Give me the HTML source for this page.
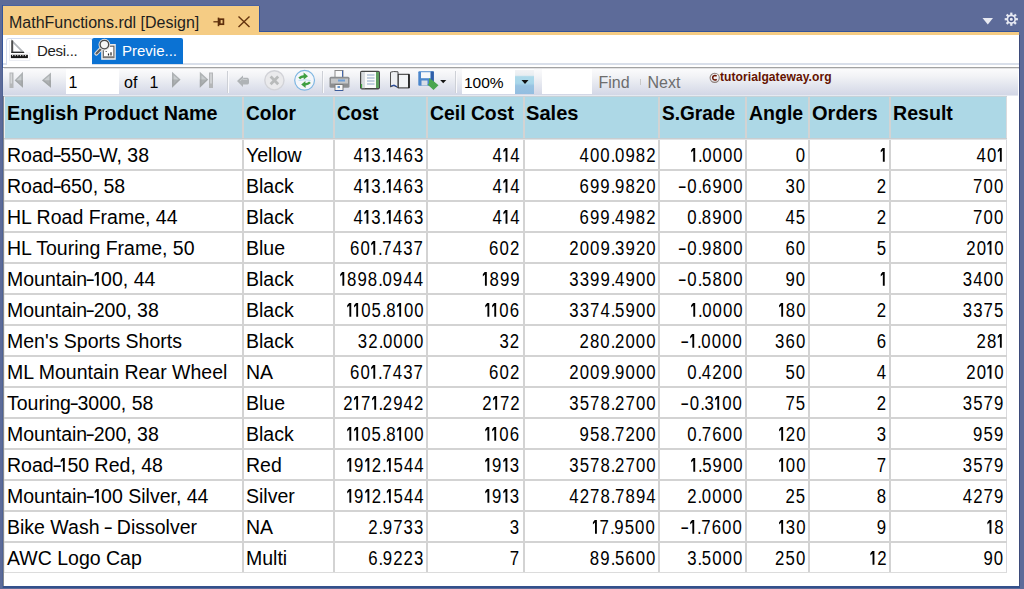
<!DOCTYPE html>
<html><head><meta charset="utf-8">
<style>
*{box-sizing:border-box}
html,body{margin:0;padding:0}
body{width:1024px;height:589px;overflow:hidden;position:relative;background:#5D6B99;font-family:"Liberation Sans",sans-serif;color:#000}
.abs{position:absolute}
#tab{position:absolute;left:3px;top:6px;width:256px;height:26px;background:#F5CC84}
#tabline{position:absolute;left:3px;top:32px;width:1016px;height:3px;background:#F5CC84}
#content{position:absolute;left:3px;top:35px;width:1016px;height:551px;background:#fff}
.t15{position:absolute;font-size:16px;line-height:18px;white-space:nowrap}
#strip{position:absolute;left:3px;top:63px;width:1016px;height:2px;background:#D9DFEA}
#grayline{position:absolute;left:3px;top:67px;width:1016px;height:1px;background:#A2A2A2;box-shadow:0 1px 0 #DCDCDC}
#toolbar{position:absolute;left:3px;top:68px;width:1015px;height:27px;background:linear-gradient(#FCFCFD 0%,#F2F3F6 30%,#E2E5EE 65%,#D3D7E6 100%)}
#tb2{position:absolute;left:3px;top:95px;width:1015px;height:1px;background:#E6E9F0}
#hdr{position:absolute;left:4px;top:96px;width:1003px;height:43px;background:#ADD8E6}
.h{position:absolute;top:96px;height:43px;font-size:21px;font-weight:bold;line-height:34px;white-space:nowrap;transform-origin:0 0;color:#000}
.c{position:absolute;height:31px;font-size:19.5px;line-height:32px;white-space:nowrap;color:#000}
.n{transform:scaleX(0.86);transform-origin:100% 0;letter-spacing:1.25px}
.n i{font-style:normal;letter-spacing:0}
.o1{display:inline-block;vertical-align:baseline;fill:#000;margin-right:1.25px}
.o{display:inline-block;width:8.2px;transform:scaleX(0.72);transform-origin:0 0;-webkit-text-stroke:0.4px #000}
.p{letter-spacing:-0.5px!important}
.m{display:inline-block;width:11.2px;transform:scaleX(1.6);transform-origin:0 0}
.hy{font-style:normal;display:inline-block;transform:scaleX(1.45)}
.t .o1{display:inline-block;vertical-align:baseline;fill:#000;margin-right:0}
.vl{position:absolute;top:96px;width:2px;height:477px;background:#D3D3D3}
.hl{position:absolute;left:4px;width:1003px;height:2px;background:#D3D3D3}
</style></head><body>
<div id="tab"></div>
<div id="tabline"></div>
<div class="abs" style="left:2px;top:5px;width:1px;height:63px;background:#34549A"></div>
<div class="abs" style="left:2px;top:68px;width:1px;height:520px;background:#4F6395"></div>
<div class="abs" style="left:3px;top:5px;width:256px;height:1px;background:#4A62A0"></div>
<div class="abs" style="left:259px;top:6px;width:1px;height:26px;background:#34549A"></div>
<div class="abs" style="left:259px;top:31px;width:760px;height:1px;background:#34549A"></div>
<div class="t15" style="left:9px;top:14px;color:#1E1E1E">MathFunctions.rdl [Design]</div>
<!-- pin -->
<svg class="abs" style="left:212px;top:16px" width="14" height="12" viewBox="212 16 14 12">
<path d="M213.4 21.8H218" stroke="#5E2F0C" stroke-width="1.3"/>
<path d="M218.5 17.6V26.2" stroke="#5E2F0C" stroke-width="1.6"/>
<rect x="219.8" y="19.2" width="3.6" height="5" fill="none" stroke="#5E2F0C" stroke-width="1.7"/>
</svg>
<!-- close -->
<svg class="abs" style="left:237px;top:15px" width="14" height="13" viewBox="0 0 14 13">
<path d="M1.5 1.5L12.5 12M12.5 1.5L1.5 12" stroke="#64340F" stroke-width="1.4"/>
</svg>
<!-- top right icons -->
<svg class="abs" style="left:980px;top:15px" width="16" height="12" viewBox="0 0 16 12">
<path d="M2.5 3H13L7.8 9.5Z" fill="#E8EAF2"/>
</svg>
<svg class="abs" style="left:1003px;top:11px" width="17" height="17" viewBox="0 0 17 17">
<g fill="#E6E9F2" transform="translate(8.3 8.2)"><circle r="4.7"/>
<rect x="-1.1" y="-6.6" width="2.2" height="13.2"/><rect x="-1.1" y="-6.6" width="2.2" height="13.2" transform="rotate(45)"/><rect x="-1.1" y="-6.6" width="2.2" height="13.2" transform="rotate(90)"/><rect x="-1.1" y="-6.6" width="2.2" height="13.2" transform="rotate(135)"/></g>
<circle cx="8.3" cy="8.2" r="2.3" fill="#E6E9F2" stroke="#4C5A8C" stroke-width="1.5"/>
</svg>

<div id="content"></div>
<div class="abs" style="left:1019px;top:35px;width:1px;height:553px;background:#3D4B7B"></div>
<div class="abs" style="left:3px;top:586px;width:1017px;height:1.5px;background:#34508C"></div>
<div class="abs" style="left:3px;top:68px;width:1px;height:518px;background:#86888E"></div>
<div id="strip"></div>
<div id="grayline"></div>
<!-- design tab -->
<div class="abs" style="left:6px;top:38px;width:87px;height:27px;border:1px solid #D5DCEE;border-bottom:none;border-radius:3px 3px 0 0;background:#fff"></div>
<div class="abs" style="left:92px;top:38px;width:91px;height:26px;background:#0B72D3;border-radius:2px 2px 0 0"></div>
<div class="t15" style="left:37px;top:42px;color:#1E1E1E;font-size:15px;letter-spacing:-0.3px">Desi...</div>
<div class="t15" style="left:122px;top:42px;color:#fff;font-size:15px">Previe...</div>

<svg class="abs" style="left:8px;top:38px" width="26" height="24" viewBox="8 38 26 24">
<path d="M9.5 40V60.5H29.8V53H26" fill="none" stroke="#E6E9F0" stroke-width="0.8"/>
<path d="M12.2 41.2V52.2H23Z" fill="#FFFFFF" stroke="#B4B8BC" stroke-width="1.8" stroke-linejoin="miter"/>
<path d="M12.2 40.4V52.6" stroke="#4E4E4E" stroke-width="1.9"/>
<path d="M11.3 52.4H24" stroke="#2C2C2C" stroke-width="1.2"/>
<rect x="10.9" y="54.8" width="17" height="3.3" fill="#151515"/>
<path d="M12.6 54.8V56.2M15.2 54.8V56.2M17.8 54.8V56.2M20.4 54.8V56.2M23 54.8V56.2M25.6 54.8V56.2" stroke="#E8E8E8" stroke-width="1"/>
</svg>

<svg class="abs" style="left:92px;top:38px" width="30" height="26" viewBox="92 38 30 26">
<rect x="101.2" y="44" width="14.6" height="15.8" fill="#ECECEC"/>
<rect x="103.3" y="46.2" width="10.6" height="11.4" fill="#FFFFFF" stroke="#5A5A5A" stroke-width="1.1"/>
<rect x="103.3" y="56.2" width="10.6" height="1.6" fill="#7E7E7E"/>
<path d="M106.2 51V51.8M108.5 53.5V55.4M111 52.3V55.4" stroke="#222" stroke-width="1.2"/>
<path d="M100.6 49.2L96.3 53.6" stroke="#E6E6E6" stroke-width="4" stroke-linecap="round"/>
<path d="M100.6 49.2L96.5 53.4" stroke="#5E5E5E" stroke-width="2.2" stroke-linecap="round"/>
<circle cx="104.4" cy="44.6" r="4.6" fill="#F6F6F6" stroke="#E4E4E4" stroke-width="2.6"/>
<circle cx="104.4" cy="44.6" r="4.3" fill="none" stroke="#4A4A4A" stroke-width="1.3"/>
</svg>

<div id="toolbar"></div>
<div id="tb2"></div>
<div class="abs" style="left:4px;top:68px;width:1014px;height:1px;background:#E2E2E4"></div>
<!-- page box -->
<div class="abs" style="left:66px;top:69px;width:53px;height:25px;background:#fff"></div>
<div class="t15" style="left:68.5px;top:74px">1</div>
<div class="t15" style="left:124px;top:74px">of</div>
<div class="t15" style="left:149.5px;top:74px">1</div>
<!-- zoom combo -->
<div class="abs" style="left:462px;top:69px;width:72px;height:25px;background:#fff"></div>
<div class="abs" style="left:515px;top:70px;width:19px;height:24px;background:linear-gradient(#F2F3F5 0%,#E8EDF1 22%,#ADD9EA 28%,#A8D6EA 55%,#98C3E2 66%,#93BDE0 100%)"></div>
<svg class="abs" style="left:519px;top:78px" width="12" height="8"><path d="M2.5 2H9.5L6 6Z" fill="#111"/></svg>
<div class="t15" style="left:464px;top:74px;font-size:15.5px">100%</div>
<!-- find -->
<div class="abs" style="left:542px;top:69px;width:50px;height:25px;background:#fff"></div>
<div class="t15" style="left:598.5px;top:74px;color:#6D6D6D">Find</div>
<div class="abs" style="left:640px;top:79px;width:1px;height:6px;background:#C8C8C8"></div>
<div class="t15" style="left:647.5px;top:74px;color:#6D6D6D">Next</div>
<svg class="abs" style="left:709px;top:72px" width="12" height="12" viewBox="0 0 12 12"><circle cx="5.7" cy="5.8" r="4.6" fill="none" stroke="#8C7F7A" stroke-width="1.1"/><path d="M7.6 4.3Q6.8 3.3 5.7 3.5Q3.6 3.9 3.7 6Q3.9 8 5.8 8.1Q6.9 8.1 7.6 7.2" fill="none" stroke="#6A1400" stroke-width="1.5"/></svg>
<div class="abs" style="left:720px;top:70px;font-size:12.1px;font-weight:bold;line-height:14px;color:#641200;white-space:nowrap;letter-spacing:0.05px">tutorialgateway.org</div>
<!-- separators -->
<div class="abs" style="left:227px;top:71px;width:1px;height:22px;background:#CDD0D6;box-shadow:1px 0 0 #FAFAFC"></div>
<div class="abs" style="left:322px;top:71px;width:1px;height:22px;background:#CDD0D6;box-shadow:1px 0 0 #FAFAFC"></div>
<div class="abs" style="left:455px;top:71px;width:1px;height:22px;background:#CDD0D6;box-shadow:1px 0 0 #FAFAFC"></div>

<svg class="abs" style="left:0;top:66px" width="460" height="28" viewBox="0 66 460 28">
<!-- first -->
<rect x="9.5" y="72.5" width="4" height="15.5" fill="#B4B6B8"/><rect x="10.5" y="73.5" width="1.6" height="10" fill="#D6D8DA"/>
<path d="M14.7 80.2L23 71.8V87.8Z" fill="#AEB2B4"/><path d="M16.5 80.2L21.3 75.5V84.8Z" fill="#C9CDCF"/><path d="M14.7 80.2H23V87.8Z" fill="#9A9C9E" opacity=".6"/>
<!-- prev -->
<path d="M42 80.2L51 72.4V87.8Z" fill="#AEB2B4"/><path d="M44 80.2L49.3 75.8V84.6Z" fill="#C9CDCF"/><path d="M42 80.2H51V87.8Z" fill="#9A9C9E" opacity=".6"/>
<!-- next -->
<path d="M180.5 79.6L172 71.8V87.8Z" fill="#AEB2B4"/><path d="M178.6 79.6L173.7 75.2V84Z" fill="#C9CDCF"/><path d="M180.5 79.6H172V87.8Z" fill="#9A9C9E" opacity=".6"/>
<!-- last -->
<path d="M208.2 79.6L199.8 71.8V87.8Z" fill="#AEB2B4"/><path d="M206.4 79.6L201.5 75.2V84Z" fill="#C9CDCF"/><path d="M208.2 79.6H199.8V87.8Z" fill="#9A9C9E" opacity=".6"/>
<rect x="209" y="72.5" width="4" height="15.5" fill="#B4B6B8"/><rect x="210.2" y="73.5" width="1.6" height="10" fill="#D6D8DA"/>
<!-- back arrow -->
<path d="M237 81L243 75.5V77.8H247.5Q249 78 249 80V82.8Q249 84.6 247.5 84.6H243V87Z" fill="#AFB3B6"/><path d="M240 81L243 78.3V79.5H247.3" stroke="#C8CCCF" stroke-width="1" fill="none"/>
<!-- stop -->
<circle cx="274.4" cy="80.3" r="9.6" fill="#EAEAEC" stroke="#D2D3D8" stroke-width="1.4"/>
<path d="M270.6 76.6L278.2 84.2M278.2 76.6L270.6 84.2" stroke="#B9BBBB" stroke-width="2.8"/>
<!-- refresh -->
<circle cx="304.6" cy="80.3" r="9.9" fill="#F4F6FA" stroke="#7DB6E2" stroke-width="1.2"/>
<path d="M298.6 80.5Q304.6 79 310.6 80.5" stroke="#B8DCF0" stroke-width="0.9" fill="none"/>
<path d="M299.2 78.4Q301 76.4 304.6 76.2" stroke="#3E9F42" stroke-width="2.4" fill="none"/>
<path d="M303.6 72.6L308 76.3L303.8 79.6Z" fill="#3E9F42"/>
<path d="M310 82.3Q308.2 84.3 304.6 84.5" stroke="#3E9F42" stroke-width="2.4" fill="none"/>
<path d="M305.6 88.1L301.2 84.4L305.4 81.1Z" fill="#3E9F42"/>
<!-- printer -->
<rect x="335" y="70.5" width="8" height="7" fill="#FAFAFA" stroke="#8A8A8A" stroke-width="1"/>
<path d="M342.5 70.5V77" stroke="#4466AA" stroke-width="1"/>
<rect x="329.5" y="76.8" width="20" height="11" rx="1.5" fill="#8C8E90"/>
<rect x="331" y="78.5" width="17" height="5" fill="#C4C6C8"/>
<rect x="338" y="79.5" width="7" height="2" fill="#6FA0D8"/>
<rect x="335" y="84.5" width="8" height="6" fill="#F8F8F8" stroke="#7C7C7C" stroke-width="1"/>
<path d="M335 90.5H343" stroke="#3C5C9C" stroke-width="1"/>
<rect x="337.5" y="86" width="2.5" height="2" fill="#6A9AD0"/>
<!-- print layout -->
<rect x="360" y="70.8" width="20" height="18.6" rx="1.8" fill="#474747"/>
<rect x="361.2" y="72" width="3.8" height="16.2" fill="#D9DCDF"/>
<rect x="365" y="72" width="11" height="16" fill="#FBFBFB"/>
<rect x="376" y="72" width="3" height="16" fill="#5E9E5E"/>
<path d="M367 75H374.5M367 78H374.5M367 81H374.5M367 84H374.5" stroke="#8FA8C8" stroke-width="1.1"/>
<path d="M361.5 88V84" stroke="#44AA44" stroke-width="1.2"/>
<!-- page setup -->
<path d="M390.5 72.2Q393 71 398 71.8V87.6L394 85.6Q392 86.2 390.5 87Z" fill="#EEF0F2" stroke="#505050" stroke-width="1"/>
<rect x="398.3" y="74.3" width="10.6" height="13.6" fill="#F2F4F6" stroke="#303030" stroke-width="1"/>
<path d="M409 74.3V88" stroke="#181818" stroke-width="1.6"/>
<path d="M391 86L394 85.2L397 86.8" stroke="#2A4C9A" stroke-width="1.2" fill="none"/>
<!-- export -->
<rect x="418.3" y="71.2" width="15.5" height="14.6" rx="1" fill="#4A86CC"/>
<rect x="421" y="72.2" width="9.5" height="6" fill="#F6F8FA"/>
<rect x="430.8" y="71.5" width="3" height="14" fill="#2E5EA8"/>
<rect x="421.5" y="80.5" width="6" height="5" fill="#D8DEE8"/>
<path d="M429 78.2V83.5L427.5 84.5L433.5 90L438.5 85.2L432.8 80.5" fill="#4BA64F"/>
<path d="M440.2 80H446.3L443.2 83.3Z" fill="#151515"/>
</svg>


<div id="hdr"></div>
<div class="vl" style="left:242px"></div>
<div class="vl" style="left:333px"></div>
<div class="vl" style="left:426px"></div>
<div class="vl" style="left:523px"></div>
<div class="vl" style="left:658px"></div>
<div class="vl" style="left:745px"></div>
<div class="vl" style="left:808px"></div>
<div class="vl" style="left:889px"></div>
<div class="vl" style="left:1006px;width:1px;background:#DADADD"></div>
<div class="vl" style="left:4px;width:1px;background:#ECEEF0"></div>
<div class="hl" style="top:138px;height:2px;background:linear-gradient(#C8CDD0 50%,#E0E3E5 50%)"></div>
<div class="hl" style="top:96px;height:1px;background:#C6D2D8"></div>
<div class="hl" style="top:169px"></div>
<div class="hl" style="top:200px"></div>
<div class="hl" style="top:231px"></div>
<div class="hl" style="top:262px"></div>
<div class="hl" style="top:293px"></div>
<div class="hl" style="top:324px"></div>
<div class="hl" style="top:355px"></div>
<div class="hl" style="top:386px"></div>
<div class="hl" style="top:417px"></div>
<div class="hl" style="top:448px"></div>
<div class="hl" style="top:479px"></div>
<div class="hl" style="top:510px"></div>
<div class="hl" style="top:541px"></div>
<div class="hl" style="top:572px;height:1px;background:#DCDCDC"></div>
<div class="h" style="left:7.2px;transform:scaleX(0.940)">English Product Name</div>
<div class="h" style="left:246.2px;transform:scaleX(0.910)">Color</div>
<div class="h" style="left:337.2px;transform:scaleX(0.889)">Cost</div>
<div class="h" style="left:430.2px;transform:scaleX(0.922)">Ceil Cost</div>
<div class="h" style="left:526.2px;transform:scaleX(0.956)">Sales</div>
<div class="h" style="left:662.2px;transform:scaleX(0.908)">S.Grade</div>
<div class="h" style="left:749.2px;transform:scaleX(0.929)">Angle</div>
<div class="h" style="left:812.2px;transform:scaleX(0.954)">Orders</div>
<div class="h" style="left:893.2px;transform:scaleX(0.933)">Result</div>
<div class="c t" style="left:7px;top:139px">Road<i class="hy">-</i>550<i class="hy">-</i>W, 38</div>
<div class="c t" style="left:246px;top:139px">Yellow</div>
<div class="c n" style="right:599.7px;top:139px">4<svg class="o1" width="7.2" height="13.8" viewBox="0 0 7.2 13.8"><path d="M3.1 0H5.3V13.8H3.1V2.6L0.6 4.4V2.3L2.8 0Z"/></svg>3<i class="p">.</i><svg class="o1" width="7.2" height="13.8" viewBox="0 0 7.2 13.8"><path d="M3.1 0H5.3V13.8H3.1V2.6L0.6 4.4V2.3L2.8 0Z"/></svg>463</div>
<div class="c n" style="right:503.70000000000005px;top:139px">4<svg class="o1" width="7.2" height="13.8" viewBox="0 0 7.2 13.8"><path d="M3.1 0H5.3V13.8H3.1V2.6L0.6 4.4V2.3L2.8 0Z"/></svg>4</div>
<div class="c n" style="right:367.70000000000005px;top:139px">400<i class="p">.</i>0982</div>
<div class="c n" style="right:280.70000000000005px;top:139px"><svg class="o1" width="7.2" height="13.8" viewBox="0 0 7.2 13.8"><path d="M3.1 0H5.3V13.8H3.1V2.6L0.6 4.4V2.3L2.8 0Z"/></svg><i class="p">.</i>0000</div>
<div class="c n" style="right:217.70000000000005px;top:139px">0</div>
<div class="c n" style="right:136.70000000000005px;top:139px"><svg class="o1" width="7.2" height="13.8" viewBox="0 0 7.2 13.8"><path d="M3.1 0H5.3V13.8H3.1V2.6L0.6 4.4V2.3L2.8 0Z"/></svg></div>
<div class="c n" style="right:19.700000000000045px;top:139px">40<svg class="o1" width="7.2" height="13.8" viewBox="0 0 7.2 13.8"><path d="M3.1 0H5.3V13.8H3.1V2.6L0.6 4.4V2.3L2.8 0Z"/></svg></div>
<div class="c t" style="left:7px;top:170px">Road<i class="hy">-</i>650, 58</div>
<div class="c t" style="left:246px;top:170px">Black</div>
<div class="c n" style="right:599.7px;top:170px">4<svg class="o1" width="7.2" height="13.8" viewBox="0 0 7.2 13.8"><path d="M3.1 0H5.3V13.8H3.1V2.6L0.6 4.4V2.3L2.8 0Z"/></svg>3<i class="p">.</i><svg class="o1" width="7.2" height="13.8" viewBox="0 0 7.2 13.8"><path d="M3.1 0H5.3V13.8H3.1V2.6L0.6 4.4V2.3L2.8 0Z"/></svg>463</div>
<div class="c n" style="right:503.70000000000005px;top:170px">4<svg class="o1" width="7.2" height="13.8" viewBox="0 0 7.2 13.8"><path d="M3.1 0H5.3V13.8H3.1V2.6L0.6 4.4V2.3L2.8 0Z"/></svg>4</div>
<div class="c n" style="right:367.70000000000005px;top:170px">699<i class="p">.</i>9820</div>
<div class="c n" style="right:280.70000000000005px;top:170px"><i class="m">-</i>0<i class="p">.</i>6900</div>
<div class="c n" style="right:217.70000000000005px;top:170px">30</div>
<div class="c n" style="right:136.70000000000005px;top:170px">2</div>
<div class="c n" style="right:19.700000000000045px;top:170px">700</div>
<div class="c t" style="left:7px;top:201px">HL Road Frame, 44</div>
<div class="c t" style="left:246px;top:201px">Black</div>
<div class="c n" style="right:599.7px;top:201px">4<svg class="o1" width="7.2" height="13.8" viewBox="0 0 7.2 13.8"><path d="M3.1 0H5.3V13.8H3.1V2.6L0.6 4.4V2.3L2.8 0Z"/></svg>3<i class="p">.</i><svg class="o1" width="7.2" height="13.8" viewBox="0 0 7.2 13.8"><path d="M3.1 0H5.3V13.8H3.1V2.6L0.6 4.4V2.3L2.8 0Z"/></svg>463</div>
<div class="c n" style="right:503.70000000000005px;top:201px">4<svg class="o1" width="7.2" height="13.8" viewBox="0 0 7.2 13.8"><path d="M3.1 0H5.3V13.8H3.1V2.6L0.6 4.4V2.3L2.8 0Z"/></svg>4</div>
<div class="c n" style="right:367.70000000000005px;top:201px">699<i class="p">.</i>4982</div>
<div class="c n" style="right:280.70000000000005px;top:201px">0<i class="p">.</i>8900</div>
<div class="c n" style="right:217.70000000000005px;top:201px">45</div>
<div class="c n" style="right:136.70000000000005px;top:201px">2</div>
<div class="c n" style="right:19.700000000000045px;top:201px">700</div>
<div class="c t" style="left:7px;top:232px">HL Touring Frame, 50</div>
<div class="c t" style="left:246px;top:232px">Blue</div>
<div class="c n" style="right:599.7px;top:232px">60<svg class="o1" width="7.2" height="13.8" viewBox="0 0 7.2 13.8"><path d="M3.1 0H5.3V13.8H3.1V2.6L0.6 4.4V2.3L2.8 0Z"/></svg><i class="p">.</i>7437</div>
<div class="c n" style="right:503.70000000000005px;top:232px">602</div>
<div class="c n" style="right:367.70000000000005px;top:232px">2009<i class="p">.</i>3920</div>
<div class="c n" style="right:280.70000000000005px;top:232px"><i class="m">-</i>0<i class="p">.</i>9800</div>
<div class="c n" style="right:217.70000000000005px;top:232px">60</div>
<div class="c n" style="right:136.70000000000005px;top:232px">5</div>
<div class="c n" style="right:19.700000000000045px;top:232px">20<svg class="o1" width="7.2" height="13.8" viewBox="0 0 7.2 13.8"><path d="M3.1 0H5.3V13.8H3.1V2.6L0.6 4.4V2.3L2.8 0Z"/></svg>0</div>
<div class="c t" style="left:7px;top:263px">Mountain<i class="hy">-</i><svg class="o1" width="7.4" height="13.8" viewBox="0 0 7.4 13.8"><path d="M2.9 0H4.8V13.8H2.9V2.6L0.7 4.4V2.3L2.6 0Z"/></svg>00, 44</div>
<div class="c t" style="left:246px;top:263px">Black</div>
<div class="c n" style="right:599.7px;top:263px"><svg class="o1" width="7.2" height="13.8" viewBox="0 0 7.2 13.8"><path d="M3.1 0H5.3V13.8H3.1V2.6L0.6 4.4V2.3L2.8 0Z"/></svg>898<i class="p">.</i>0944</div>
<div class="c n" style="right:503.70000000000005px;top:263px"><svg class="o1" width="7.2" height="13.8" viewBox="0 0 7.2 13.8"><path d="M3.1 0H5.3V13.8H3.1V2.6L0.6 4.4V2.3L2.8 0Z"/></svg>899</div>
<div class="c n" style="right:367.70000000000005px;top:263px">3399<i class="p">.</i>4900</div>
<div class="c n" style="right:280.70000000000005px;top:263px"><i class="m">-</i>0<i class="p">.</i>5800</div>
<div class="c n" style="right:217.70000000000005px;top:263px">90</div>
<div class="c n" style="right:136.70000000000005px;top:263px"><svg class="o1" width="7.2" height="13.8" viewBox="0 0 7.2 13.8"><path d="M3.1 0H5.3V13.8H3.1V2.6L0.6 4.4V2.3L2.8 0Z"/></svg></div>
<div class="c n" style="right:19.700000000000045px;top:263px">3400</div>
<div class="c t" style="left:7px;top:294px">Mountain<i class="hy">-</i>200, 38</div>
<div class="c t" style="left:246px;top:294px">Black</div>
<div class="c n" style="right:599.7px;top:294px"><svg class="o1" width="7.2" height="13.8" viewBox="0 0 7.2 13.8"><path d="M3.1 0H5.3V13.8H3.1V2.6L0.6 4.4V2.3L2.8 0Z"/></svg><svg class="o1" width="7.2" height="13.8" viewBox="0 0 7.2 13.8"><path d="M3.1 0H5.3V13.8H3.1V2.6L0.6 4.4V2.3L2.8 0Z"/></svg>05<i class="p">.</i>8<svg class="o1" width="7.2" height="13.8" viewBox="0 0 7.2 13.8"><path d="M3.1 0H5.3V13.8H3.1V2.6L0.6 4.4V2.3L2.8 0Z"/></svg>00</div>
<div class="c n" style="right:503.70000000000005px;top:294px"><svg class="o1" width="7.2" height="13.8" viewBox="0 0 7.2 13.8"><path d="M3.1 0H5.3V13.8H3.1V2.6L0.6 4.4V2.3L2.8 0Z"/></svg><svg class="o1" width="7.2" height="13.8" viewBox="0 0 7.2 13.8"><path d="M3.1 0H5.3V13.8H3.1V2.6L0.6 4.4V2.3L2.8 0Z"/></svg>06</div>
<div class="c n" style="right:367.70000000000005px;top:294px">3374<i class="p">.</i>5900</div>
<div class="c n" style="right:280.70000000000005px;top:294px"><svg class="o1" width="7.2" height="13.8" viewBox="0 0 7.2 13.8"><path d="M3.1 0H5.3V13.8H3.1V2.6L0.6 4.4V2.3L2.8 0Z"/></svg><i class="p">.</i>0000</div>
<div class="c n" style="right:217.70000000000005px;top:294px"><svg class="o1" width="7.2" height="13.8" viewBox="0 0 7.2 13.8"><path d="M3.1 0H5.3V13.8H3.1V2.6L0.6 4.4V2.3L2.8 0Z"/></svg>80</div>
<div class="c n" style="right:136.70000000000005px;top:294px">2</div>
<div class="c n" style="right:19.700000000000045px;top:294px">3375</div>
<div class="c t" style="left:7px;top:325px">Men&#39;s Sports Shorts</div>
<div class="c t" style="left:246px;top:325px">Black</div>
<div class="c n" style="right:599.7px;top:325px">32<i class="p">.</i>0000</div>
<div class="c n" style="right:503.70000000000005px;top:325px">32</div>
<div class="c n" style="right:367.70000000000005px;top:325px">280<i class="p">.</i>2000</div>
<div class="c n" style="right:280.70000000000005px;top:325px"><i class="m">-</i><svg class="o1" width="7.2" height="13.8" viewBox="0 0 7.2 13.8"><path d="M3.1 0H5.3V13.8H3.1V2.6L0.6 4.4V2.3L2.8 0Z"/></svg><i class="p">.</i>0000</div>
<div class="c n" style="right:217.70000000000005px;top:325px">360</div>
<div class="c n" style="right:136.70000000000005px;top:325px">6</div>
<div class="c n" style="right:19.700000000000045px;top:325px">28<svg class="o1" width="7.2" height="13.8" viewBox="0 0 7.2 13.8"><path d="M3.1 0H5.3V13.8H3.1V2.6L0.6 4.4V2.3L2.8 0Z"/></svg></div>
<div class="c t" style="left:7px;top:356px">ML Mountain Rear Wheel</div>
<div class="c t" style="left:246px;top:356px">NA</div>
<div class="c n" style="right:599.7px;top:356px">60<svg class="o1" width="7.2" height="13.8" viewBox="0 0 7.2 13.8"><path d="M3.1 0H5.3V13.8H3.1V2.6L0.6 4.4V2.3L2.8 0Z"/></svg><i class="p">.</i>7437</div>
<div class="c n" style="right:503.70000000000005px;top:356px">602</div>
<div class="c n" style="right:367.70000000000005px;top:356px">2009<i class="p">.</i>9000</div>
<div class="c n" style="right:280.70000000000005px;top:356px">0<i class="p">.</i>4200</div>
<div class="c n" style="right:217.70000000000005px;top:356px">50</div>
<div class="c n" style="right:136.70000000000005px;top:356px">4</div>
<div class="c n" style="right:19.700000000000045px;top:356px">20<svg class="o1" width="7.2" height="13.8" viewBox="0 0 7.2 13.8"><path d="M3.1 0H5.3V13.8H3.1V2.6L0.6 4.4V2.3L2.8 0Z"/></svg>0</div>
<div class="c t" style="left:7px;top:387px">Touring<i class="hy">-</i>3000, 58</div>
<div class="c t" style="left:246px;top:387px">Blue</div>
<div class="c n" style="right:599.7px;top:387px">2<svg class="o1" width="7.2" height="13.8" viewBox="0 0 7.2 13.8"><path d="M3.1 0H5.3V13.8H3.1V2.6L0.6 4.4V2.3L2.8 0Z"/></svg>7<svg class="o1" width="7.2" height="13.8" viewBox="0 0 7.2 13.8"><path d="M3.1 0H5.3V13.8H3.1V2.6L0.6 4.4V2.3L2.8 0Z"/></svg><i class="p">.</i>2942</div>
<div class="c n" style="right:503.70000000000005px;top:387px">2<svg class="o1" width="7.2" height="13.8" viewBox="0 0 7.2 13.8"><path d="M3.1 0H5.3V13.8H3.1V2.6L0.6 4.4V2.3L2.8 0Z"/></svg>72</div>
<div class="c n" style="right:367.70000000000005px;top:387px">3578<i class="p">.</i>2700</div>
<div class="c n" style="right:280.70000000000005px;top:387px"><i class="m">-</i>0<i class="p">.</i>3<svg class="o1" width="7.2" height="13.8" viewBox="0 0 7.2 13.8"><path d="M3.1 0H5.3V13.8H3.1V2.6L0.6 4.4V2.3L2.8 0Z"/></svg>00</div>
<div class="c n" style="right:217.70000000000005px;top:387px">75</div>
<div class="c n" style="right:136.70000000000005px;top:387px">2</div>
<div class="c n" style="right:19.700000000000045px;top:387px">3579</div>
<div class="c t" style="left:7px;top:418px">Mountain<i class="hy">-</i>200, 38</div>
<div class="c t" style="left:246px;top:418px">Black</div>
<div class="c n" style="right:599.7px;top:418px"><svg class="o1" width="7.2" height="13.8" viewBox="0 0 7.2 13.8"><path d="M3.1 0H5.3V13.8H3.1V2.6L0.6 4.4V2.3L2.8 0Z"/></svg><svg class="o1" width="7.2" height="13.8" viewBox="0 0 7.2 13.8"><path d="M3.1 0H5.3V13.8H3.1V2.6L0.6 4.4V2.3L2.8 0Z"/></svg>05<i class="p">.</i>8<svg class="o1" width="7.2" height="13.8" viewBox="0 0 7.2 13.8"><path d="M3.1 0H5.3V13.8H3.1V2.6L0.6 4.4V2.3L2.8 0Z"/></svg>00</div>
<div class="c n" style="right:503.70000000000005px;top:418px"><svg class="o1" width="7.2" height="13.8" viewBox="0 0 7.2 13.8"><path d="M3.1 0H5.3V13.8H3.1V2.6L0.6 4.4V2.3L2.8 0Z"/></svg><svg class="o1" width="7.2" height="13.8" viewBox="0 0 7.2 13.8"><path d="M3.1 0H5.3V13.8H3.1V2.6L0.6 4.4V2.3L2.8 0Z"/></svg>06</div>
<div class="c n" style="right:367.70000000000005px;top:418px">958<i class="p">.</i>7200</div>
<div class="c n" style="right:280.70000000000005px;top:418px">0<i class="p">.</i>7600</div>
<div class="c n" style="right:217.70000000000005px;top:418px"><svg class="o1" width="7.2" height="13.8" viewBox="0 0 7.2 13.8"><path d="M3.1 0H5.3V13.8H3.1V2.6L0.6 4.4V2.3L2.8 0Z"/></svg>20</div>
<div class="c n" style="right:136.70000000000005px;top:418px">3</div>
<div class="c n" style="right:19.700000000000045px;top:418px">959</div>
<div class="c t" style="left:7px;top:449px">Road<i class="hy">-</i><svg class="o1" width="7.4" height="13.8" viewBox="0 0 7.4 13.8"><path d="M2.9 0H4.8V13.8H2.9V2.6L0.7 4.4V2.3L2.6 0Z"/></svg>50 Red, 48</div>
<div class="c t" style="left:246px;top:449px">Red</div>
<div class="c n" style="right:599.7px;top:449px"><svg class="o1" width="7.2" height="13.8" viewBox="0 0 7.2 13.8"><path d="M3.1 0H5.3V13.8H3.1V2.6L0.6 4.4V2.3L2.8 0Z"/></svg>9<svg class="o1" width="7.2" height="13.8" viewBox="0 0 7.2 13.8"><path d="M3.1 0H5.3V13.8H3.1V2.6L0.6 4.4V2.3L2.8 0Z"/></svg>2<i class="p">.</i><svg class="o1" width="7.2" height="13.8" viewBox="0 0 7.2 13.8"><path d="M3.1 0H5.3V13.8H3.1V2.6L0.6 4.4V2.3L2.8 0Z"/></svg>544</div>
<div class="c n" style="right:503.70000000000005px;top:449px"><svg class="o1" width="7.2" height="13.8" viewBox="0 0 7.2 13.8"><path d="M3.1 0H5.3V13.8H3.1V2.6L0.6 4.4V2.3L2.8 0Z"/></svg>9<svg class="o1" width="7.2" height="13.8" viewBox="0 0 7.2 13.8"><path d="M3.1 0H5.3V13.8H3.1V2.6L0.6 4.4V2.3L2.8 0Z"/></svg>3</div>
<div class="c n" style="right:367.70000000000005px;top:449px">3578<i class="p">.</i>2700</div>
<div class="c n" style="right:280.70000000000005px;top:449px"><svg class="o1" width="7.2" height="13.8" viewBox="0 0 7.2 13.8"><path d="M3.1 0H5.3V13.8H3.1V2.6L0.6 4.4V2.3L2.8 0Z"/></svg><i class="p">.</i>5900</div>
<div class="c n" style="right:217.70000000000005px;top:449px"><svg class="o1" width="7.2" height="13.8" viewBox="0 0 7.2 13.8"><path d="M3.1 0H5.3V13.8H3.1V2.6L0.6 4.4V2.3L2.8 0Z"/></svg>00</div>
<div class="c n" style="right:136.70000000000005px;top:449px">7</div>
<div class="c n" style="right:19.700000000000045px;top:449px">3579</div>
<div class="c t" style="left:7px;top:480px">Mountain<i class="hy">-</i><svg class="o1" width="7.4" height="13.8" viewBox="0 0 7.4 13.8"><path d="M2.9 0H4.8V13.8H2.9V2.6L0.7 4.4V2.3L2.6 0Z"/></svg>00 Silver, 44</div>
<div class="c t" style="left:246px;top:480px">Silver</div>
<div class="c n" style="right:599.7px;top:480px"><svg class="o1" width="7.2" height="13.8" viewBox="0 0 7.2 13.8"><path d="M3.1 0H5.3V13.8H3.1V2.6L0.6 4.4V2.3L2.8 0Z"/></svg>9<svg class="o1" width="7.2" height="13.8" viewBox="0 0 7.2 13.8"><path d="M3.1 0H5.3V13.8H3.1V2.6L0.6 4.4V2.3L2.8 0Z"/></svg>2<i class="p">.</i><svg class="o1" width="7.2" height="13.8" viewBox="0 0 7.2 13.8"><path d="M3.1 0H5.3V13.8H3.1V2.6L0.6 4.4V2.3L2.8 0Z"/></svg>544</div>
<div class="c n" style="right:503.70000000000005px;top:480px"><svg class="o1" width="7.2" height="13.8" viewBox="0 0 7.2 13.8"><path d="M3.1 0H5.3V13.8H3.1V2.6L0.6 4.4V2.3L2.8 0Z"/></svg>9<svg class="o1" width="7.2" height="13.8" viewBox="0 0 7.2 13.8"><path d="M3.1 0H5.3V13.8H3.1V2.6L0.6 4.4V2.3L2.8 0Z"/></svg>3</div>
<div class="c n" style="right:367.70000000000005px;top:480px">4278<i class="p">.</i>7894</div>
<div class="c n" style="right:280.70000000000005px;top:480px">2<i class="p">.</i>0000</div>
<div class="c n" style="right:217.70000000000005px;top:480px">25</div>
<div class="c n" style="right:136.70000000000005px;top:480px">8</div>
<div class="c n" style="right:19.700000000000045px;top:480px">4279</div>
<div class="c t" style="left:7px;top:511px">Bike Wash <i class="hy">-</i> Dissolver</div>
<div class="c t" style="left:246px;top:511px">NA</div>
<div class="c n" style="right:599.7px;top:511px">2<i class="p">.</i>9733</div>
<div class="c n" style="right:503.70000000000005px;top:511px">3</div>
<div class="c n" style="right:367.70000000000005px;top:511px"><svg class="o1" width="7.2" height="13.8" viewBox="0 0 7.2 13.8"><path d="M3.1 0H5.3V13.8H3.1V2.6L0.6 4.4V2.3L2.8 0Z"/></svg>7<i class="p">.</i>9500</div>
<div class="c n" style="right:280.70000000000005px;top:511px"><i class="m">-</i><svg class="o1" width="7.2" height="13.8" viewBox="0 0 7.2 13.8"><path d="M3.1 0H5.3V13.8H3.1V2.6L0.6 4.4V2.3L2.8 0Z"/></svg><i class="p">.</i>7600</div>
<div class="c n" style="right:217.70000000000005px;top:511px"><svg class="o1" width="7.2" height="13.8" viewBox="0 0 7.2 13.8"><path d="M3.1 0H5.3V13.8H3.1V2.6L0.6 4.4V2.3L2.8 0Z"/></svg>30</div>
<div class="c n" style="right:136.70000000000005px;top:511px">9</div>
<div class="c n" style="right:19.700000000000045px;top:511px"><svg class="o1" width="7.2" height="13.8" viewBox="0 0 7.2 13.8"><path d="M3.1 0H5.3V13.8H3.1V2.6L0.6 4.4V2.3L2.8 0Z"/></svg>8</div>
<div class="c t" style="left:7px;top:542px">AWC Logo Cap</div>
<div class="c t" style="left:246px;top:542px">Multi</div>
<div class="c n" style="right:599.7px;top:542px">6<i class="p">.</i>9223</div>
<div class="c n" style="right:503.70000000000005px;top:542px">7</div>
<div class="c n" style="right:367.70000000000005px;top:542px">89<i class="p">.</i>5600</div>
<div class="c n" style="right:280.70000000000005px;top:542px">3<i class="p">.</i>5000</div>
<div class="c n" style="right:217.70000000000005px;top:542px">250</div>
<div class="c n" style="right:136.70000000000005px;top:542px"><svg class="o1" width="7.2" height="13.8" viewBox="0 0 7.2 13.8"><path d="M3.1 0H5.3V13.8H3.1V2.6L0.6 4.4V2.3L2.8 0Z"/></svg>2</div>
<div class="c n" style="right:19.700000000000045px;top:542px">90</div>
</body></html>
